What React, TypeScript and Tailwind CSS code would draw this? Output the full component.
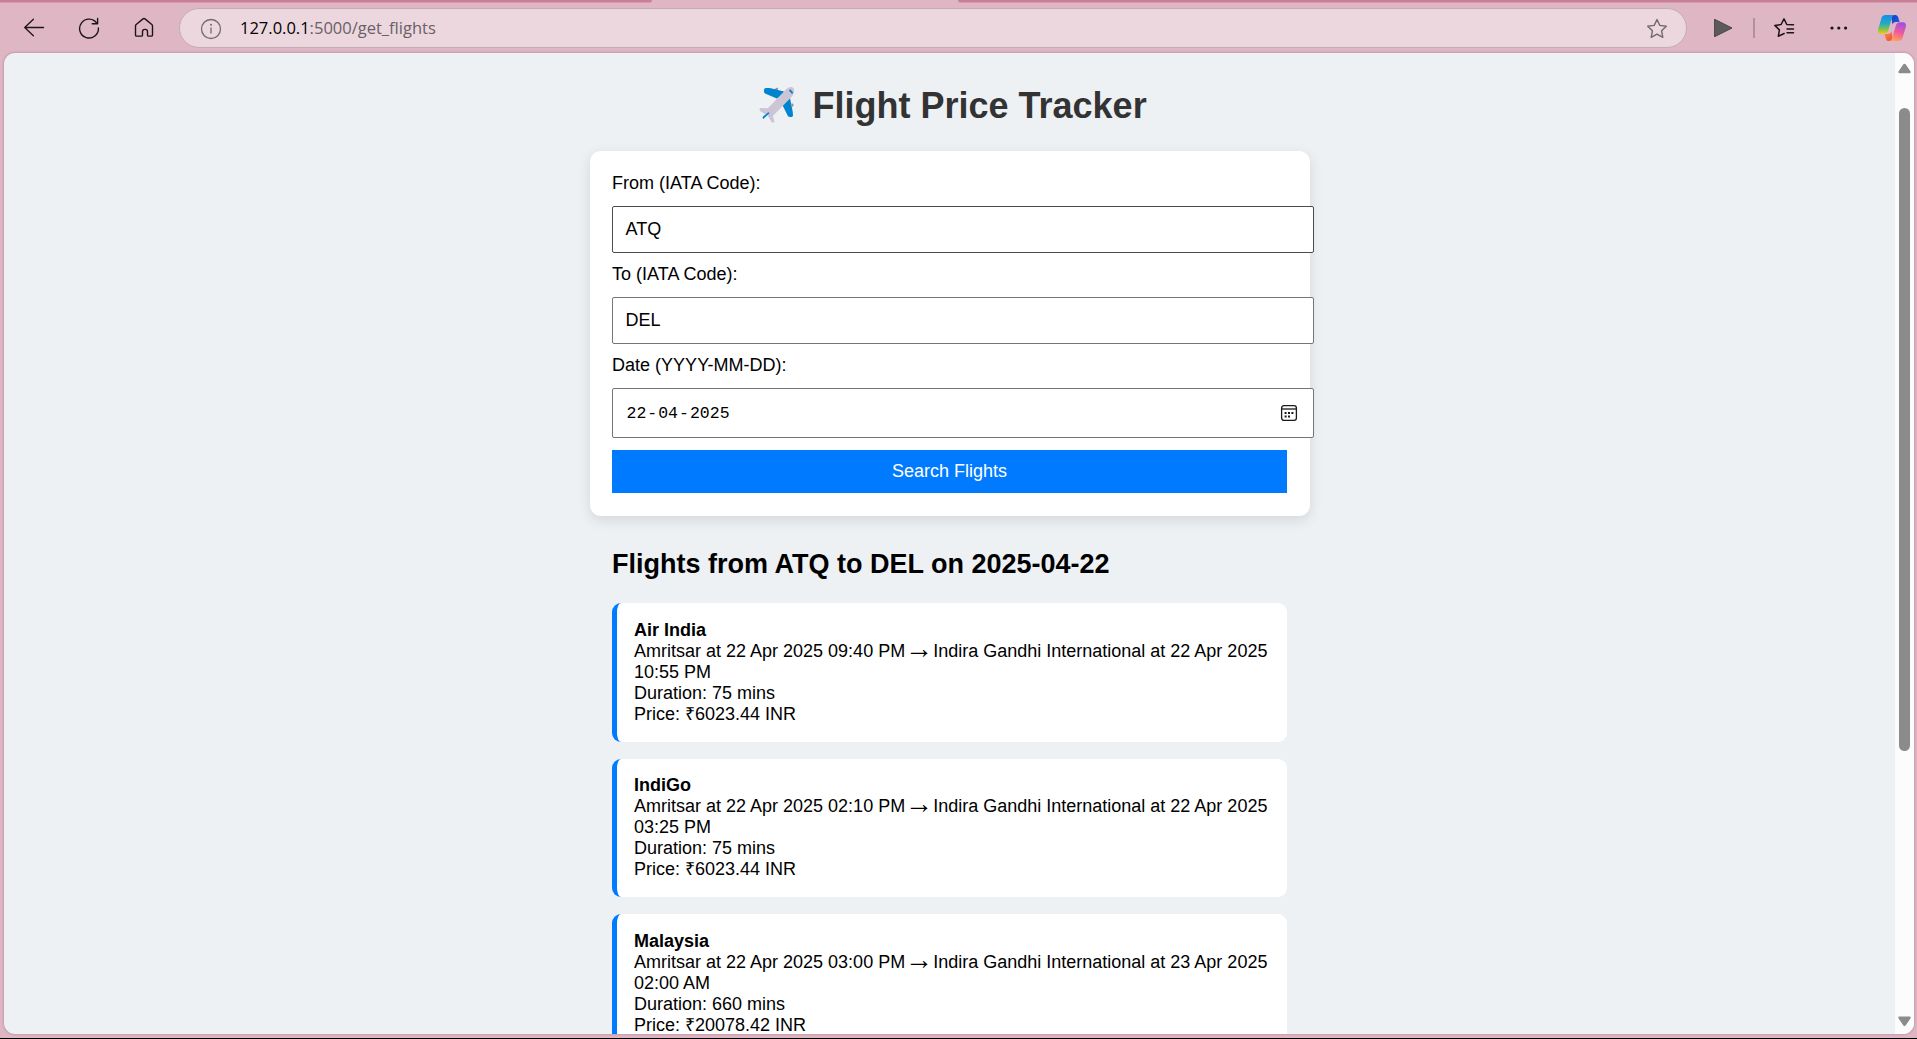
import React from "react";

type Flight = {
  airline: string;
  departure: string;
  arrival: string;
  duration: number;
  price: string;
};

const flights: Flight[] = [
  { airline: "Air India", departure: "22 Apr 2025 09:40 PM", arrival: "22 Apr 2025 10:55 PM", duration: 75, price: "6023.44" },
  { airline: "IndiGo", departure: "22 Apr 2025 02:10 PM", arrival: "22 Apr 2025 03:25 PM", duration: 75, price: "6023.44" },
  { airline: "Malaysia", departure: "22 Apr 2025 03:00 PM", arrival: "23 Apr 2025 02:00 AM", duration: 660, price: "20078.42" },
];

const STAR = "M11 1.5 L13.8 7.4 L20.3 8.3 L15.6 12.8 L16.8 19.3 L11 16.2 L5.2 19.3 L6.4 12.8 L1.7 8.3 L8.2 7.4 Z";

function Toolbar() {
  return (
    <div className="flex h-[53px] shrink-0 flex-col">
      <div className="flex h-[3px] justify-between">
        <div className="h-[3px] w-[652px] rounded-br-[6px] border-b border-[#d59aad] bg-[#c97f97]" />
        <div className="h-[3px] w-[959px] rounded-bl-[6px] border-b border-[#d59aad] bg-[#c97f97]" />
      </div>
      <div className="flex h-[50px] items-start pt-[5px]">
        <svg className="ml-[23px] mt-[9px]" width="22" height="22" viewBox="0 0 22 22" fill="none" stroke="#1b1418" strokeWidth="1.3" strokeLinecap="round" strokeLinejoin="round">
          <path d="M20.5 10.5H1.7M10.4 2.2L1.7 10.5l8.7 8.3" />
        </svg>
        <svg className="ml-[33px] mt-[9px]" width="22" height="22" viewBox="0 0 22 22" fill="none" stroke="#1b1418" strokeWidth="1.4" strokeLinecap="round" strokeLinejoin="round">
          <path d="M19 6.6A9.4 9.4 0 1 0 20.4 11M19.6 1.5v5.3h-5.4" />
        </svg>
        <svg className="ml-[33px] mt-[9px]" width="22" height="22" viewBox="0 0 22 22" fill="none" stroke="#1b1418" strokeWidth="1.4" strokeLinejoin="round">
          <path d="M2.5 8.9c0-.6.2-1 .7-1.4L10 1.9c.6-.5 1.4-.5 2 0l6.8 5.6c.5.4.7.8.7 1.4v9c0 .8-.5 1.2-1.2 1.2h-2.6c-.7 0-1.2-.4-1.2-1.2v-3.3c0-1.4-.9-2.2-2.2-2.2h-.6c-1.3 0-2.2.8-2.2 2.2v3.3c0 .8-.5 1.2-1.2 1.2H3.7c-.7 0-1.2-.4-1.2-1.2z" />
        </svg>
        <div className="ml-[24px] flex h-[40px] w-[1508px] items-center rounded-full border border-[#c3adb5] bg-[#ecd7de] pl-[20px] pr-[18px]">
          <svg className="mt-px" width="22" height="22" viewBox="0 0 22 22" fill="none" stroke="#716a6e" strokeWidth="1.3">
            <circle cx="11" cy="11" r="9.5" />
            <path d="M11 9.5v6" />
            <circle cx="11" cy="6.8" r="1" fill="#716a6e" stroke="none" />
          </svg>
          <div className="ml-[18px] grow whitespace-nowrap font-['Open_Sans','Noto_Sans',sans-serif] text-[16.5px] leading-[22px] text-[#696166]">
            <span className="text-black">127.0.0.1</span>:5000/get_flights
          </div>
          <svg className="mt-px" width="22" height="22" viewBox="0 0 22 22" fill="none" stroke="#716a6e" strokeWidth="1.4" strokeLinejoin="round">
            <path d={STAR} />
          </svg>
        </div>
        <svg className="ml-[27px] mt-[10px]" width="20" height="20" viewBox="0 0 20 20">
          <path d="M.6 1.3L18 10L.6 18.7z" fill="#5d5a5c" stroke="#494648" strokeLinejoin="round" />
        </svg>
        <div className="ml-[19px] mt-[10px] h-[20px] w-[2px] bg-[#b3909b]" />
        <svg className="ml-[18px] mt-[9px]" width="22" height="22" viewBox="0 0 22 22" fill="none" stroke="#1b1418" strokeWidth="1.5" strokeLinecap="round" strokeLinejoin="round">
          <path d="M11.2 16.5L5.3 19.3l1.1-6.4L1.8 8.4l6.3-.9L11 1.8l2.8 5.7 6.7.3M14 11.9h6.5M14 15.8h6.5" />
        </svg>
        <svg className="ml-[35px] mt-[17px]" width="18" height="6" viewBox="0 0 18 6" fill="#1b1418">
          <circle cx="2" cy="3" r="1.6" />
          <circle cx="8.8" cy="3" r="1.6" />
          <circle cx="15.6" cy="3" r="1.6" />
        </svg>
        <svg className="ml-[29px] mt-[6px]" width="30" height="28" viewBox="0 0 30 28">
          <defs>
            <linearGradient id="cpLeft" x1="0" y1="0" x2="0" y2="1">
              <stop offset="0" stopColor="#1590e8" />
              <stop offset=".45" stopColor="#23a9c6" />
              <stop offset=".75" stopColor="#7fc44b" />
              <stop offset="1" stopColor="#f5c60f" />
            </linearGradient>
            <linearGradient id="cpRight" x1=".6" y1="0" x2=".3" y2="1">
              <stop offset="0" stopColor="#a04ee6" />
              <stop offset=".5" stopColor="#ee5b9c" />
              <stop offset="1" stopColor="#ffa35a" />
            </linearGradient>
            <linearGradient id="cpTop" x1="0" y1="0" x2="1" y2="1">
              <stop offset="0" stopColor="#1b37ba" />
              <stop offset="1" stopColor="#2363e8" />
            </linearGradient>
            <linearGradient id="cpBottom" x1="0" y1="0" x2="1" y2="1">
              <stop offset="0" stopColor="#ff9440" />
              <stop offset="1" stopColor="#e8483d" />
            </linearGradient>
          </defs>
          <path d="M14 1h4.2c1.7 0 2.6 1 3.1 2.6L22.6 8h-3.7c-1.8 0-2.8.8-3.4 2.7z" fill="url(#cpTop)" />
          <path d="M16 27h-4.2c-1.7 0-2.6-1-3.1-2.6L7.4 20h3.7c1.8 0 2.8-.8 3.4-2.7z" fill="url(#cpBottom)" />
          <path d="M8.6 1h9.1c-1.5.4-2.3 1.4-2.8 3.1l-3.8 12.7c-.7 2.1-2 3-4.2 3H4.4c-3 0-4-2-3.1-5L4.4 4.3C5.1 2.1 6.4 1 8.6 1z" fill="url(#cpLeft)" />
          <path d="M21.4 27h-9.1c1.5-.4 2.3-1.4 2.8-3.1l3.8-12.7c.7-2.1 2-3 4.2-3h2.5c3 0 4 2 3.1 5l-3.1 10.5c-.7 2.2-2 3.3-4.2 3.3z" fill="url(#cpRight)" />
        </svg>
      </div>
    </div>
  );
}

function Plane() {
  return (
    <svg className="-ml-px mr-px mt-[1px] shrink-0" width="36" height="37" viewBox="0 0 36 37">
      <path d="M15 3.4l2.6-1.7c1.2-.3 1.8.4 1.6 1.4l-1 1.6zM32.5 17.2l1.6.6c.8.8.6 1.8-.3 2.6l-1 .8z" fill="#998ea4" />
      <path d="M5.9 2.3c1.2-.6 4-.4 6 0L29 6.6 17.8 12.6 6 7.5C4.6 6.6 4.5 3.3 5.9 2.3z" fill="#0084ce" />
      <path d="M34 29.5c0-2-.3-4.5-.8-6.5L30.3 8.4 23 18.2l5.9 11.8c1 1.5 4.9 1.5 5.1-.5z" fill="#0084ce" />
      <path d="M34.4 2.1c1.5 2 .6 6-1.7 8.6L13.9 30.1l1.6 5.7c-1 1.4-2.4 1.1-3.4-.2l-3.3-6-7.4-4.4c-1.3-1-1.3-2.2-.1-3.2l7.6.2L27.4 3.1C29.5 1 32.9.2 34.4 2.1z" fill="#cdc4d6" />
      <path d="M29.9 4.4c.7-1 1.4-1 2-.4l1.8 2c.6.8.2 1.5-.7 1.9z" fill="#0084ce" />
      <path d="M9.3 26.2l-5.3 4.4c-.6.7-.4 1.6.3 2.3l6.4-5.8z" fill="#0084ce" />
    </svg>
  );
}

function Label({ children }: { children: React.ReactNode }) {
  return <label className="mt-[11px] block h-[21px] pl-[0.6px] first:mt-0">{children}</label>;
}

function SearchForm() {
  return (
    <div className="flex h-[365px] w-[720px] flex-col rounded-[11px] bg-white px-[22px] pt-[22px] shadow-[0_4px_14px_rgba(0,0,0,0.11)]">
      <Label>From (IATA Code):</Label>
      <div className="mt-[12px] flex h-[47px] w-[702px] items-center rounded-[2px] border border-[#4c4c4c] bg-white px-[13px]">ATQ</div>
      <Label>To (IATA Code):</Label>
      <div className="mt-[12px] flex h-[47px] w-[702px] items-center rounded-[2px] border border-[#767676] bg-white px-[13px]">DEL</div>
      <Label>Date (YYYY-MM-DD):</Label>
      <div className="mt-[12px] flex h-[50px] w-[702px] items-center rounded-[2px] border border-[#767676] bg-white pl-[14px] pr-[15px]">
        <div className="flex grow gap-[1px] pt-px font-['Liberation_Mono',monospace] text-[16.5px]">
          <span>22</span>
          <span>-</span>
          <span>04</span>
          <span>-</span>
          <span>2025</span>
        </div>
        <svg width="18" height="18" viewBox="0 0 18 18" fill="none" stroke="#1a1a1a" strokeWidth="1.3">
          <rect x="1.6" y="1.6" width="14.8" height="14.8" rx="2.4" />
          <path d="M1.6 5h14.8" />
          <path d="M4.6 9h2M8 9h2M11.4 9h2M4.6 12.4h2M8 12.4h2" strokeWidth="2" />
        </svg>
      </div>
      <button className="mt-[12px] flex h-[43px] w-[675px] items-center justify-center bg-[#007bff] pl-px text-white">Search Flights</button>
    </div>
  );
}

function FlightCard({ flight }: { flight: Flight }) {
  return (
    <div className="h-[138.75px] w-[675px] shrink-0 rounded-[9px] border-l-[5px] border-[#007bff] bg-white px-[17px] pt-[16.5px]">
      <div className="font-bold">{flight.airline}</div>
      <div>
        Amritsar at {flight.departure} <span className="px-[0.6px] align-[-1px] font-['Liberation_Mono',monospace] text-[28px] leading-[0]">→</span> Indira Gandhi International at {flight.arrival}
      </div>
      <div>Duration: {flight.duration} mins</div>
      <div>Price: ₹{flight.price} INR</div>
    </div>
  );
}

function Scrollbar() {
  return (
    <div className="flex w-[19px] shrink-0 flex-col items-center bg-[#fcfcfc]">
      <svg className="mt-[10px] shrink-0" width="13" height="11" viewBox="0 0 13 11" fill="#8b8b8b">
        <path d="M5.2 1.5c.7-1.1 1.9-1.1 2.6 0l4.6 6.8c.6 1 .2 1.9-1 1.9H1.6c-1.2 0-1.6-.9-1-1.9z" />
      </svg>
      <div className="mt-[34px] h-[643px] w-[11px] shrink-0 rounded-full bg-[#8b8b8b]" />
      <svg className="mb-[7px] mt-auto shrink-0" width="13" height="11" viewBox="0 0 13 11" fill="#8b8b8b">
        <path d="M5.2 9.3c.7 1.1 1.9 1.1 2.6 0l4.6-6.8c.6-1 .2-1.9-1-1.9H1.6c-1.2 0-1.6.9-1 1.9z" />
      </svg>
    </div>
  );
}

export default function App() {
  return (
    <div className="flex h-[1039px] w-[1917px] flex-col overflow-hidden border-b border-black bg-[#dfb7c4]">
      <Toolbar />
      <div className="mx-[4px] flex h-[981px] w-[1910px] shrink-0 overflow-hidden rounded-[11px] bg-[#edf1f4] shadow-[0_0_3px_rgba(120,50,75,0.45)]">
        <main className="flex grow flex-col items-center overflow-hidden font-['Liberation_Sans',Arial,sans-serif] text-[18px] leading-[21px] text-black">
          <h1 className="mt-[32px] flex h-[41px] w-[720px] shrink-0 pl-[170px] text-[36px] font-bold leading-[41px] text-[#333333]">
            <Plane />
            <span className="ml-[17px] whitespace-nowrap">Flight Price Tracker</span>
          </h1>
          <div className="mt-[25px] shrink-0">
            <SearchForm />
          </div>
          <section className="mt-[33px] flex w-[675px] shrink-0 flex-col">
            <h2 className="h-[31px] text-[27px] font-bold leading-[31px]">Flights from ATQ to DEL on 2025-04-22</h2>
            <div className="mt-[23px] flex flex-col gap-[16.875px]">
              {flights.map((flight) => (
                <FlightCard key={flight.airline} flight={flight} />
              ))}
            </div>
          </section>
        </main>
        <Scrollbar />
      </div>
    </div>
  );
}
